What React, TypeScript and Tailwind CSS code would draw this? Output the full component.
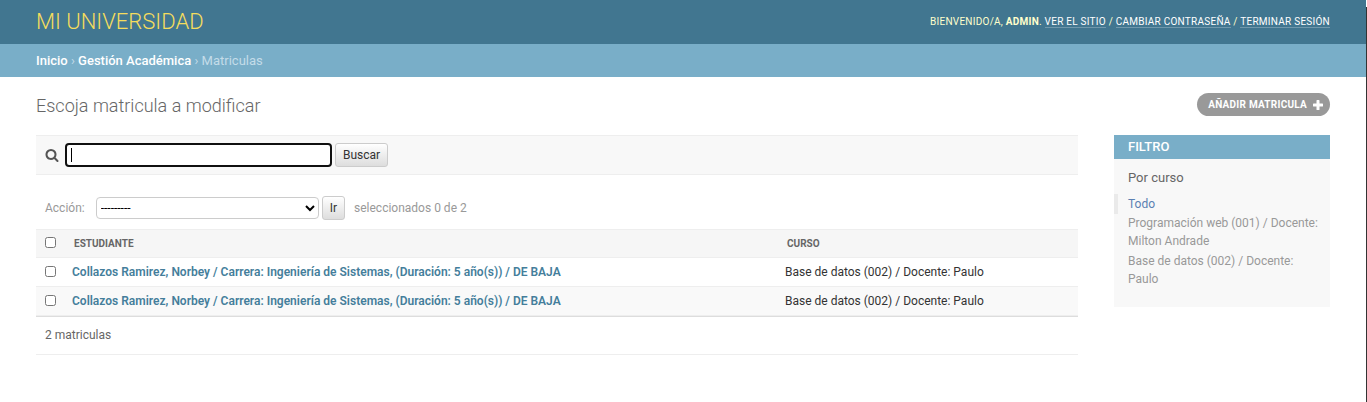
import { useState } from "react";

const STUDENT = "Collazos Ramirez, Norbey / Carrera: Ingeniería de Sistemas, (Duración: 5 año(s)) / DE BAJA";
const COURSE = "Base de datos (002) / Docente: Paulo";

const rows = [
  { id: 2, student: STUDENT, course: COURSE },
  { id: 1, student: STUDENT, course: COURSE },
];

const filters = ["Todo", "Programación web (001) / Docente: Milton Andrade", "Base de datos (002) / Docente: Paulo"];

const buttonStyle =
  "h-6 rounded-[3px] border border-[#ccc] bg-linear-to-b from-white to-[#ddd] px-[7px] text-[12px] leading-[20px] text-[#333]";
const toolLink = "border-b border-white/25 text-white";

function SearchIcon() {
  return (
    <svg viewBox="0 0 1792 1792" className="size-[14px] shrink-0" fill="#555" aria-hidden="true">
      <path d="M1216 832q0-185-131.500-316.500t-316.500-131.500-316.500 131.500-131.500 316.500 131.500 316.500 316.500 131.500 316.500-131.500 131.500-316.500zm512 832q0 52-38 90t-90 38q-54 0-90-38l-343-342q-179 124-399 124-143 0-273.500-55.500t-225-150-150-225-55.500-273.500 55.500-273.500 150-225 225-150 273.500-55.500 273.500 55.500 225 150 150 225 55.500 273.500q0 220-124 399l343 343q37 37 37 90z" />
    </svg>
  );
}

function PlusIcon() {
  return (
    <svg viewBox="0 0 10 10" className="size-[10px] shrink-0" fill="#fff" aria-hidden="true">
      <path d="M4.100 0h1.800q.6 0 .6.600v2.900h2.900q.6 0 .6.600v1.800q0 .6-.6.600h-2.900v2.900q0 .6-.6.600h-1.800q-.6 0-.6-.6v-2.900h-2.900q-.6 0-.6-.6v-1.800q0-.6.600-.6h2.900v-2.900q0-.6.600-.6z" />
    </svg>
  );
}

export default function App() {
  const [selected, setSelected] = useState<number[]>([]);
  const [query, setQuery] = useState("");
  const all = selected.length === rows.length;
  const toggle = (id: number) =>
    setSelected((s) => (s.includes(id) ? s.filter((x) => x !== id) : [...s, id]));

  return (
    <div className="flex min-h-screen bg-white font-[Roboto,sans-serif] text-[12px] text-[#333]">
      <div className="min-w-0 flex-1">
        <header className="flex h-11 items-center justify-between bg-[#417690] px-9 text-[#ffc]">
          <a href="#" className="text-[22px] leading-[24px] font-light text-[#f5dd5d]">
            MI UNIVERSIDAD
          </a>
          <div className="text-[10px] leading-[12px] tracking-wide uppercase">
            Bienvenido/a, <strong className="font-bold">admin</strong>.{" "}
            <a href="#" className={toolLink}>Ver el sitio</a> /{" "}
            <a href="#" className={toolLink}>Cambiar contraseña</a> /{" "}
            <a href="#" className={toolLink}>Terminar sesión</a>
          </div>
        </header>

        <nav className="h-[33px] bg-[#79aec8] px-9 text-[13px] leading-[33px] text-[#c4dce8]" aria-label="Ruta">
          <a href="#" className="font-medium text-white">Inicio</a> ›{" "}
          <a href="#" className="font-medium text-white">Gestión Académica</a> › Matriculas
        </nav>

        <main className="px-9">
          <div className="flex h-[58px] items-start justify-between pt-4">
            <h1 className="text-[18px] leading-[26px] font-light text-[#666]">Escoja matricula a modificar</h1>
            <a
              href="#"
              className="flex h-[23px] items-center gap-[6px] rounded-full bg-[#999] pr-[7px] pl-[11px] text-[10px] font-bold tracking-wide text-white uppercase"
            >
              Añadir matricula
              <PlusIcon />
            </a>
          </div>

          <div className="flex items-start gap-9">
            <section className="min-w-0 flex-1">
              <form
                className="flex h-10 items-center gap-[3px] border-y border-[#eee] bg-[#f8f8f8] pl-[9px]"
                onSubmit={(e) => e.preventDefault()}
              >
                <label htmlFor="searchbar" className="mr-[3px]">
                  <SearchIcon />
                </label>
                <div className="relative">
                  <input
                    id="searchbar"
                    type="text"
                    autoFocus
                    value={query}
                    onChange={(e) => setQuery(e.target.value)}
                    aria-label="Buscar"
                    className={`block h-6 w-[267px] rounded-[4px] border-2 border-[#101010] bg-white px-1 text-[12px] outline-none ${query ? "" : "caret-transparent"}`}
                  />
                  {!query && (
                    <span className="pointer-events-none absolute top-[5px] left-[6px] h-[14px] w-px bg-black" />
                  )}
                </div>
                <button type="submit" className={buttonStyle}>Buscar</button>
              </form>

              <div className="flex h-[54px] items-center pt-[11px] pl-[9px] text-[#999]">
                <label htmlFor="action" className="mr-[11px]">Acción:</label>
                <select
                  id="action"
                  className="mr-[3px] h-[22px] w-[223px] rounded-[4px] border border-[#ccc] bg-white text-[12px] text-black"
                >
                  <option>---------</option>
                  <option>Eliminar matriculas seleccionado/s</option>
                </select>
                <button type="button" className={buttonStyle}>Ir</button>
                <span className="ml-[9px]">seleccionados {selected.length} de 2</span>
              </div>

              <table className="w-full border-collapse text-left">
                <thead>
                  <tr className="h-7 border-y border-[#eee] bg-[#f6f6f6] text-[10px] text-[#666] uppercase">
                    <th className="w-[36px] pl-[9px]">
                      <input
                        type="checkbox"
                        aria-label="Seleccionar todo"
                        className="mb-[2px] block size-[11px]"
                        checked={all}
                        onChange={() => setSelected(all ? [] : rows.map((r) => r.id))}
                      />
                    </th>
                    <th className="w-[713px] pl-[2px] font-bold">Estudiante</th>
                    <th className="pl-[2px] font-bold">Curso</th>
                  </tr>
                </thead>
                <tbody>
                  {rows.map((r) => (
                    <tr key={r.id} className="h-[29px] border-b border-[#eee] even:bg-[#f9f9f9]">
                      <td className="pl-[9px]">
                        <input
                          type="checkbox"
                          aria-label={r.student}
                          className="mb-[2px] block size-[11px]"
                          checked={selected.includes(r.id)}
                          onChange={() => toggle(r.id)}
                        />
                      </td>
                      <th className="font-semibold text-[#447e9b]">
                        <a href="#">{r.student}</a>
                      </th>
                      <td>{r.course}</td>
                    </tr>
                  ))}
                </tbody>
              </table>

              <p className="h-[39px] border-t border-b border-t-[#ddd] border-b-[#eee] pl-[9px] leading-[36px] text-[#666]">
                2 matriculas
              </p>
            </section>

            <aside className="w-[216px] bg-[#f8f8f8] pb-[17px]">
              <h2 className="h-6 bg-[#79aec8] px-[14px] text-[13px] leading-6 font-medium text-white uppercase">Filtro</h2>
              <h3 className="px-[14px] pt-[10px] pb-[7px] text-[13px] leading-[18px] text-[#666]">Por curso</h3>
              <ul className="leading-[18px] text-[#999]">
                {filters.map((f, i) => (
                  <li
                    key={f}
                    className={
                      i === 0
                        ? "border-l-4 border-[#eaeaea] pl-[10px] leading-[20px] text-[#5b80b2]"
                        : "pr-3 pb-[2px] pl-[14px]"
                    }
                  >
                    <a href="#">{f}</a>
                  </li>
                ))}
              </ul>
            </aside>
          </div>
        </main>
      </div>
      <div className="w-px pt-[7px]">
        <div className="h-full bg-[#333]" />
      </div>
    </div>
  );
}
